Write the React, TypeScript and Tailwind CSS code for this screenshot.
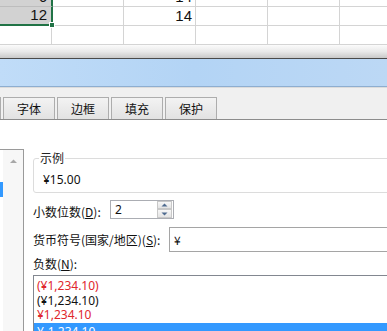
import React from 'react';

const cjk = { fontFamily: '"Noto Sans CJK SC", "Noto Sans", sans-serif' };

function Row({ h, a, c, last }: { h: string; a?: string; c?: string; last?: boolean }) {
  return (
    <div className={`flex ${h}`}>
      <div
        className={`w-[53px] shrink-0 flex items-end justify-end pr-[4px] overflow-hidden bg-[#d2d2d2] border-r-2 border-r-[#217346] ${
          last ? 'border-b-2 border-b-[#217346]' : 'border-b border-b-[#bdbdbd]'
        }`}
      >
        {a && <span className="leading-[18px] text-[15px] text-[#111]">{a}</span>}
      </div>
      <div className="w-[71px] shrink-0 border-r border-b border-[#d4d4d4]" />
      <div className="w-[72px] shrink-0 border-r border-b border-[#d4d4d4] flex items-end justify-end pr-[3px] overflow-hidden">
        {c && <span className="leading-[18px] text-[15px] text-[#111]">{c}</span>}
      </div>
      <div className="w-[72px] shrink-0 border-r border-b border-[#d4d4d4]" />
      <div className="w-[72px] shrink-0 border-r border-b border-[#d4d4d4]" />
      <div className="flex-1 border-b border-[#d4d4d4]" />
    </div>
  );
}

function EmptyRow() {
  return (
    <div className="flex h-[19px]">
      <div className="w-[52px] shrink-0 border-r border-b border-[#d4d4d4]" />
      <div className="w-[72px] shrink-0 border-r border-b border-[#d4d4d4]" />
      <div className="w-[72px] shrink-0 border-r border-b border-[#d4d4d4]" />
      <div className="w-[72px] shrink-0 border-r border-b border-[#d4d4d4]" />
      <div className="w-[72px] shrink-0 border-r border-b border-[#d4d4d4]" />
      <div className="flex-1 border-b border-[#d4d4d4]" />
    </div>
  );
}

function Tab({ label }: { label: string }) {
  return (
    <div className="w-[52px] h-[22px] shrink-0 flex items-center justify-center border border-b-0 border-[#adadad] bg-gradient-to-b from-[#f3f3f3] to-[#e2e2e2] text-[12px] text-[#111]">
      {label}
    </div>
  );
}

export default function App() {
  return (
    <div
      className="w-[387px] h-[331px] overflow-hidden bg-white flex flex-col"
      style={{ fontFamily: '"Liberation Sans", Arial, sans-serif' }}
    >
      {/* spreadsheet behind the dialog */}
      <div className="relative shrink-0">
        <Row h="h-[7px]" a="6" c="14" />
        <Row h="h-[19px]" a="12" c="14" last />
        <EmptyRow />
        <div className="absolute left-[49px] top-[22px] w-[6px] h-[6px] bg-[#217346] border border-white" />
      </div>

      {/* window edge + dialog title bar */}
      <div className="h-[13px] shrink-0 bg-gradient-to-b from-[#fbfbfb] via-[#e9e9e9] to-[#c9c9c9]" />
      <div className="h-px shrink-0 bg-[#4a4a4a]" />
      <div className="h-[28px] shrink-0 bg-gradient-to-r from-[#c0dcf8] via-[#b3d4f5] to-[#bcd8f5] border-b border-[#8eaed0]" />

      {/* dialog body */}
      <div className="flex-1 flex flex-col bg-[#f0f0f0]" style={cjk}>
        <div className="h-[10px] shrink-0 border-t border-[#dcdcdc]" />
        <div className="flex gap-[2px] h-[22px] shrink-0 border-b border-[#8c8c8c] box-content">
          <div className="w-px h-[22px] shrink-0 border-r border-[#adadad] bg-[#e6e6e6]" />
          <Tab label="字体" />
          <Tab label="边框" />
          <Tab label="填充" />
          <Tab label="保护" />
        </div>

        <div className="flex-1 flex bg-white">
          {/* category list (cut off at left) */}
          <div className="w-[24px] shrink-0 mt-[29px] border-t border-r border-[#9a9a9a] flex">
            <div className="w-[3px] shrink-0 flex flex-col">
              <div className="h-[32px]" />
              <div className="h-[15px] bg-[#3399ff]" />
            </div>
            <div className="flex-1 bg-[#f7f7f7] flex flex-col items-center">
              <svg width="9" height="6" viewBox="0 0 9 6" className="mt-[8px]">
                <path d="M1 5 L4.5 1.5 L8 5 Z" fill="#a8a8a8" />
              </svg>
            </div>
          </div>

          {/* right pane */}
          <div className="flex-1 ml-[9px] flex flex-col overflow-hidden">
            <fieldset className="mt-[31px] h-[42px] w-[400px] shrink-0 border border-[#dcdcdc] rounded-[3px] px-[8px] pb-0">
              <legend className="px-[1px] -ml-[3px] text-[12px] leading-[14px] text-[#222]">示例</legend>
              <div className="text-[12px] leading-[16px] text-[#111] pt-[7px] pl-px" style={{ fontFamily: '"Noto Sans", sans-serif' }}>
                ¥15.00
              </div>
            </fieldset>

            <div className="mt-[7px] flex items-start h-[18px] shrink-0">
              <span className="text-[12px] leading-[16px] text-[#111] pt-[4px] w-[77px]">
                小数位数(<span className="underline">D</span>):
              </span>
              <div className="w-[64px] h-[19px] border border-[#abadb3] flex items-center justify-between pl-[4px] pr-px">
                <span className="text-[12px] leading-[14px] text-[#111]" style={{ fontFamily: '"Noto Sans", sans-serif' }}>2</span>
                <div className="flex flex-col w-[15px] h-[17px]">
                  <div className="h-[8px] border border-[#c8c8c8] bg-gradient-to-b from-[#f7f7f7] to-[#e4e4e4] flex items-center justify-center">
                    <svg width="7" height="4" viewBox="0 0 7 4"><path d="M0.5 3.5 L3.5 0.5 L6.5 3.5 Z" fill="#4f6b8f" /></svg>
                  </div>
                  <div className="h-[9px] border border-[#c8c8c8] bg-gradient-to-b from-[#f7f7f7] to-[#e4e4e4] flex items-center justify-center">
                    <svg width="7" height="4" viewBox="0 0 7 4"><path d="M0.5 0.5 L3.5 3.5 L6.5 0.5 Z" fill="#4f6b8f" /></svg>
                  </div>
                </div>
              </div>
            </div>

            <div className="mt-[9px] flex items-center h-[25px] shrink-0">
              <span className="text-[12px] leading-[16px] text-[#111] w-[136px] shrink-0">
                货币符号(国家/地区)(<span className="underline">S</span>):
              </span>
              <div className="w-[300px] h-[25px] shrink-0 border border-[#a5a5a5] flex items-center pl-[4px]">
                <span className="text-[12px] text-[#111]">¥</span>
              </div>
            </div>

            <div className="mt-[4px] text-[12px] leading-[16px] text-[#111] shrink-0">
              负数(<span className="underline">N</span>):
            </div>

            <div className="mt-[3px] w-[400px] flex-1 border-t border-l border-[#828790] pt-[3px] text-[12px]" style={{ fontFamily: '"Noto Sans", sans-serif' }}>
              <div className="h-[14px] leading-[14px] pl-[3px] text-[#e0262d]">(¥1,234.10)</div>
              <div className="h-[15px] leading-[15px] pl-[3px] text-[#111]">(¥1,234.10)</div>
              <div className="h-[14px] leading-[14px] pl-[3px] text-[#e0262d]">¥1,234.10</div>
              <div className="h-[15px] leading-[17px] pl-[3px] mt-[1px] text-white bg-[#3399ff]">¥-1,234.10</div>
            </div>
          </div>
        </div>
      </div>
    </div>
  );
}
